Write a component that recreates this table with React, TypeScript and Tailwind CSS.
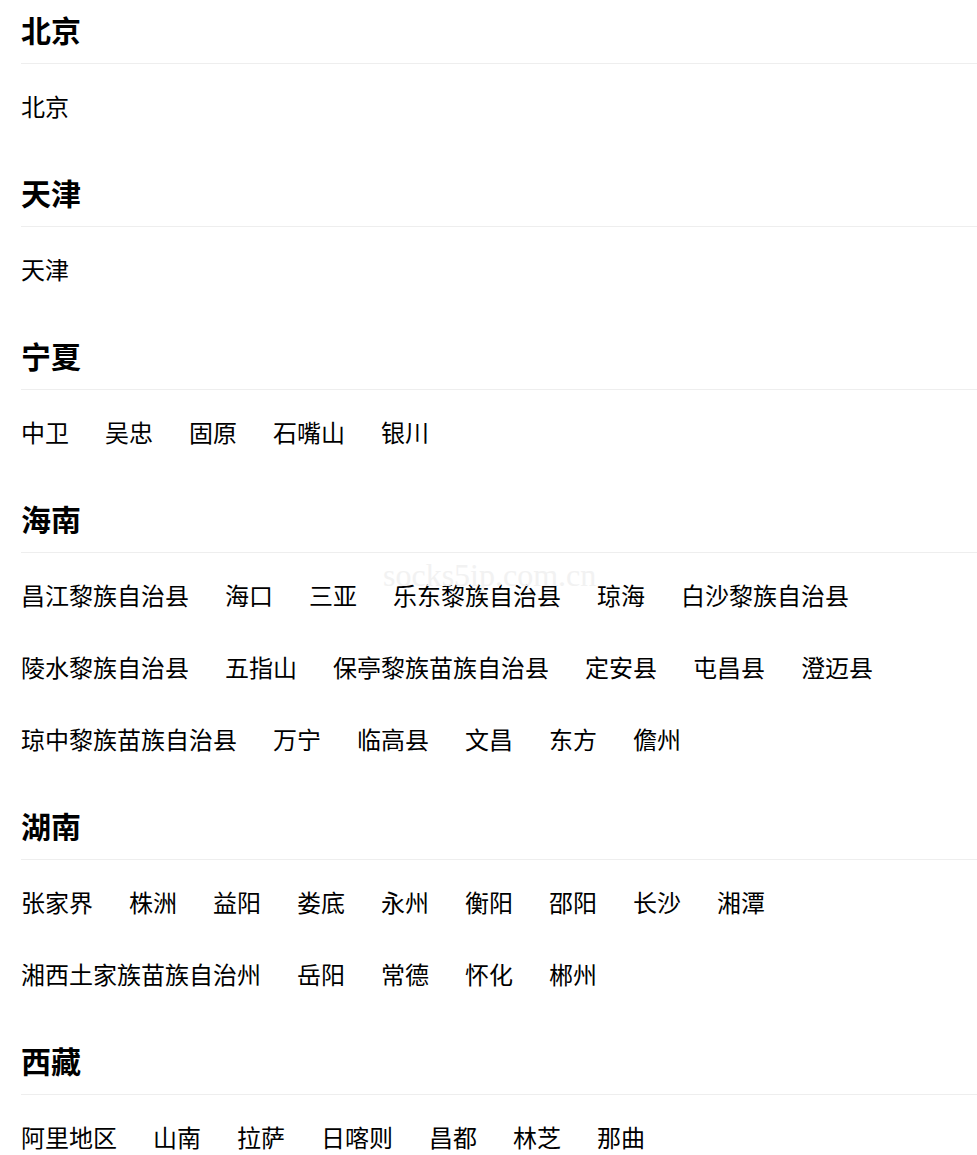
const regions: { name: string; cities: string[] }[] = [
  { name: "北京", cities: ["北京"] },
  { name: "天津", cities: ["天津"] },
  { name: "宁夏", cities: ["中卫", "吴忠", "固原", "石嘴山", "银川"] },
  {
    name: "海南",
    cities: [
      "昌江黎族自治县", "海口", "三亚", "乐东黎族自治县", "琼海", "白沙黎族自治县",
      "陵水黎族自治县", "五指山", "保亭黎族苗族自治县", "定安县", "屯昌县", "澄迈县",
      "琼中黎族苗族自治县", "万宁", "临高县", "文昌", "东方", "儋州",
    ],
  },
  {
    name: "湖南",
    cities: [
      "张家界", "株洲", "益阳", "娄底", "永州", "衡阳", "邵阳", "长沙", "湘潭",
      "湘西土家族苗族自治州", "岳阳", "常德", "怀化", "郴州",
    ],
  },
  { name: "西藏", cities: ["阿里地区", "山南", "拉萨", "日喀则", "昌都", "林芝", "那曲"] },
];

export default function App() {
  return (
    <div
      className="relative min-h-[1155px] w-[977px] overflow-hidden bg-white pt-[9px] text-black"
      style={{ fontFamily: '"Noto Sans CJK SC", "Noto Sans", sans-serif' }}
    >
      <div className="flex flex-col gap-[30px] pl-[21px]">
        {regions.map((r) => (
          <section key={r.name}>
            <h2 className="border-b border-[#eeeeee] pb-[14px] text-[30px] font-bold leading-[40px]">{r.name}</h2>
            <ul className="flex flex-wrap gap-x-9 pt-[6px]">
              {r.cities.map((c) => (
                <li key={c} className="text-[24px] leading-[72px]">
                  {c}
                </li>
              ))}
            </ul>
          </section>
        ))}
      </div>
      <div
        className="pointer-events-none absolute left-[383px] top-[555px] text-[32px] leading-[40px] text-[#f2f2f2]"
        style={{ fontFamily: '"Liberation Serif", serif' }}
      >
        socks5ip.com.cn
      </div>
    </div>
  );
}
